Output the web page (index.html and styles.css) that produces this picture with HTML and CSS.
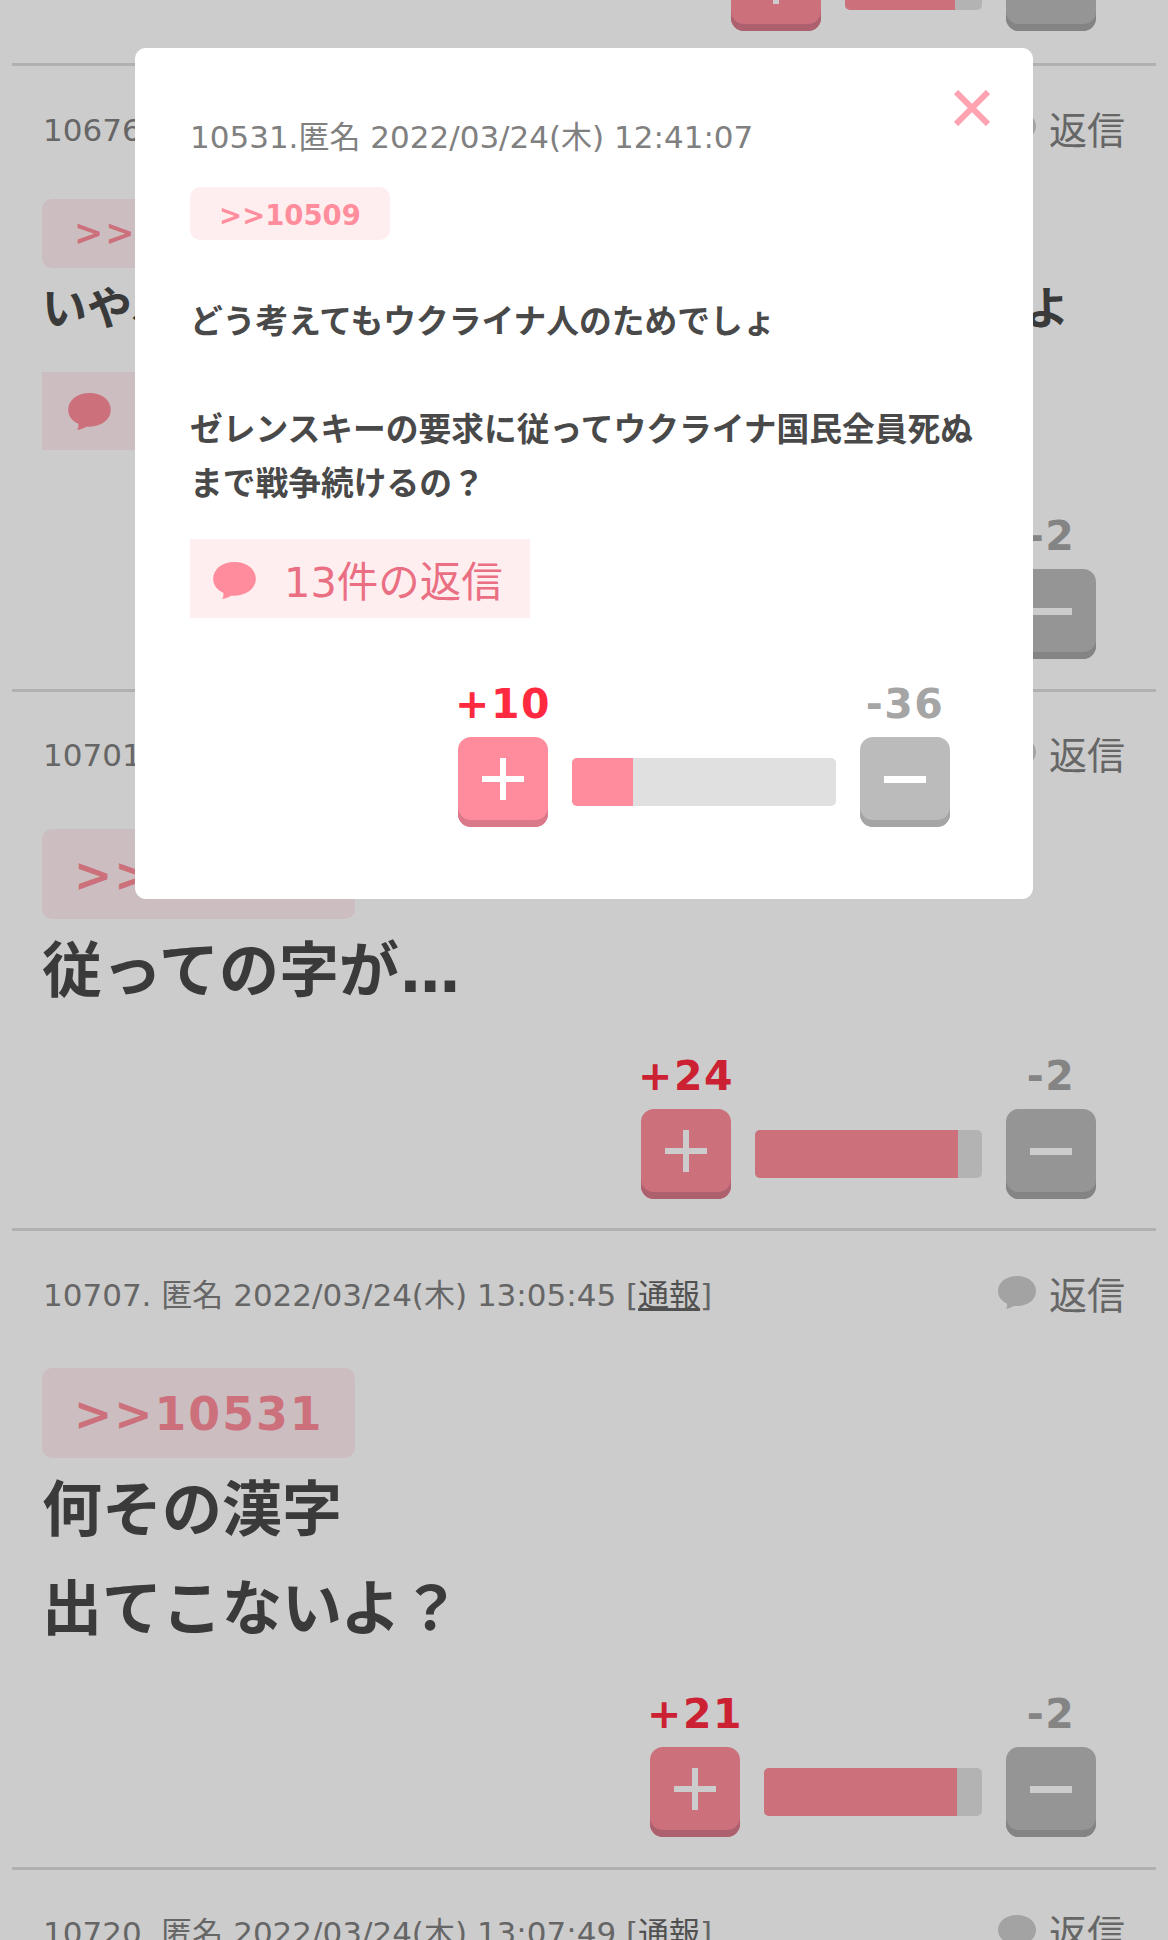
FILE: index.html
```html
<!DOCTYPE html>
<html lang="ja">
<head>
  <meta charset="UTF-8" />
  <title>コメント</title>
  <meta name="viewport" content="width=device-width, initial-scale=1.0" />
  <link rel="stylesheet" href="styles.css">
</head>
<body>

  <div class="page">
    <div class="posts">

      <!-- cut off by the top of the window -->
      <div class="post post-cut">
        <div class="votes">
          <div class="vote">
            <span class="count plus-count">+23</span>
            <button class="btn plus-btn"><span class="plus-mark"></span></button>
          </div>
          <div class="bar" style="width: 137px"><div class="fill" style="width: 80%"></div></div>
          <div class="vote">
            <span class="count minus-count">-2</span>
            <button class="btn minus-btn"><span class="minus-mark"></span></button>
          </div>
        </div>
      </div>

      <div class="post post-small">
        <div class="post-head">
          <p class="meta">10676. 匿名 2022/03/24(木) 12:58:21 [<u>通報</u>]</p>
          <span class="reply">
            <svg class="bubble" viewBox="0 0 38 33"><path d="M19 0C8 0 0 6.5 0 15c0 6 4 10.5 9 12.5.5 2 0 4-1 5.5 3-.5 6-2 8-3h3c11 0 19-6.5 19-15S30 0 19 0z"/></svg>
            返信
          </span>
        </div>
        <span class="anchor">&gt;&gt;10531</span>
        <p class="body-text">いや、どう考えてもウクライナ人のためじゃないよ</p>
        <span class="replies">
          <svg class="bubble" viewBox="0 0 38 33"><path d="M19 0C8 0 0 6.5 0 15c0 6 4 10.5 9 12.5.5 2 0 4-1 5.5 3-.5 6-2 8-3h3c11 0 19-6.5 19-15S30 0 19 0z"/></svg>
          13件の返信
        </span>
        <div class="votes">
          <div class="vote">
            <span class="count plus-count">+18</span>
            <button class="btn plus-btn"><span class="plus-mark"></span></button>
          </div>
          <div class="bar" style="width: 227px"><div class="fill" style="width: 89%"></div></div>
          <div class="vote">
            <span class="count minus-count">-2</span>
            <button class="btn minus-btn"><span class="minus-mark"></span></button>
          </div>
        </div>
      </div>

      <div class="post">
        <div class="post-head">
          <p class="meta">10701. 匿名 2022/03/24(木) 13:04:12 [<u>通報</u>]</p>
          <span class="reply">
            <svg class="bubble" viewBox="0 0 38 33"><path d="M19 0C8 0 0 6.5 0 15c0 6 4 10.5 9 12.5.5 2 0 4-1 5.5 3-.5 6-2 8-3h3c11 0 19-6.5 19-15S30 0 19 0z"/></svg>
            返信
          </span>
        </div>
        <span class="anchor">&gt;&gt;10531</span>
        <p class="body-text">従っての字が<span class="dots">...</span></p>
        <div class="votes">
          <div class="vote">
            <span class="count plus-count">+24</span>
            <button class="btn plus-btn"><span class="plus-mark"></span></button>
          </div>
          <div class="bar" style="width: 227px"><div class="fill" style="width: 89.5%"></div></div>
          <div class="vote">
            <span class="count minus-count">-2</span>
            <button class="btn minus-btn"><span class="minus-mark"></span></button>
          </div>
        </div>
      </div>

      <div class="post">
        <div class="post-head">
          <p class="meta">10707. 匿名 2022/03/24(木) 13:05:45 [<u>通報</u>]</p>
          <span class="reply">
            <svg class="bubble" viewBox="0 0 38 33"><path d="M19 0C8 0 0 6.5 0 15c0 6 4 10.5 9 12.5.5 2 0 4-1 5.5 3-.5 6-2 8-3h3c11 0 19-6.5 19-15S30 0 19 0z"/></svg>
            返信
          </span>
        </div>
        <span class="anchor">&gt;&gt;10531</span>
        <p class="body-text">何その漢字<br>出てこないよ？</p>
        <div class="votes">
          <div class="vote">
            <span class="count plus-count">+21</span>
            <button class="btn plus-btn"><span class="plus-mark"></span></button>
          </div>
          <div class="bar" style="width: 218px"><div class="fill" style="width: 88.6%"></div></div>
          <div class="vote">
            <span class="count minus-count">-2</span>
            <button class="btn minus-btn"><span class="minus-mark"></span></button>
          </div>
        </div>
      </div>

      <div class="post">
        <div class="post-head">
          <p class="meta">10720. 匿名 2022/03/24(木) 13:07:49 [<u>通報</u>]</p>
          <span class="reply">
            <svg class="bubble" viewBox="0 0 38 33"><path d="M19 0C8 0 0 6.5 0 15c0 6 4 10.5 9 12.5.5 2 0 4-1 5.5 3-.5 6-2 8-3h3c11 0 19-6.5 19-15S30 0 19 0z"/></svg>
            返信
          </span>
        </div>
      </div>

    </div>

    <!-- Comment popup -->
    <div class="overlay">
      <div class="modal">
        <svg class="close" viewBox="0 0 36 36"><path d="M2 2l32 32M34 2L2 34"/></svg>
        <p class="modal-meta">10531.匿名 2022/03/24(木) 12:41:07</p>
        <span class="modal-anchor">&gt;&gt;10509</span>
        <p class="modal-text">どう考えてもウクライナ人のためでしょ<br><br>ゼレンスキーの要求に従ってウクライナ国民全員死ぬまで戦争続けるの？</p>
        <span class="modal-replies">
          <svg class="bubble" viewBox="0 0 38 33"><path d="M19 0C8 0 0 6.5 0 15c0 6 4 10.5 9 12.5.5 2 0 4-1 5.5 3-.5 6-2 8-3h3c11 0 19-6.5 19-15S30 0 19 0z"/></svg>
          13件の返信
        </span>
        <div class="votes modal-votes">
          <div class="vote">
            <span class="count plus-count">+10</span>
            <button class="btn plus-btn"><span class="plus-mark"></span></button>
          </div>
          <div class="bar" style="width: 264px"><div class="fill" style="width: 23%"></div></div>
          <div class="vote">
            <span class="count minus-count">-36</span>
            <button class="btn minus-btn"><span class="minus-mark"></span></button>
          </div>
        </div>
      </div>
    </div>
  </div>

</body>
</html>
```

FILE: styles.css
```css
body, p {
  margin: 0;
  padding: 0;
}

body {
  font-family: "DejaVu Sans", "Noto Sans CJK JP", sans-serif;
  background: white;
  color: #494949;
}

.page {
  position: relative;
  height: 1940px;
  overflow: hidden;
}

.posts {
  margin: -147px 12px 0;
}

.post {
  border-bottom: 3px solid #ddd;
  padding: 36px 0 29.5px;
}

.post-cut {
  padding: 0 0 32px;
}

.post:last-child {
  border-bottom: none;
}

.post-head {
  display: flex;
  justify-content: space-between;
  align-items: center;
  height: 50px;
  padding: 0 31px;
  margin-bottom: 51px;
}

.meta {
  font-size: 31px;
  color: #808080;
}

.meta u {
  color: #666;
}

.reply {
  display: flex;
  align-items: center;
  gap: 13px;
  font-size: 38px;
  color: #808080;
}

.reply .bubble {
  width: 38px;
  height: 33px;
  fill: #ccc;
  margin-top: 1px;
}

.anchor {
  display: block;
  width: fit-content;
  margin-left: 30px;
  padding: 0 31px 0 32px;
  height: 90px;
  line-height: 94px;
  border-radius: 10px;
  background: #ffeef0;
  color: #ff8d9c;
  font-size: 45.7px;
  font-weight: bold;
  letter-spacing: 2px;
}

.body-text {
  margin: 0 0 0 30px;
  padding-top: 3px;
  font-size: 60px;
  font-weight: bold;
  line-height: 99px;
  white-space: nowrap;
}

.dots {
  letter-spacing: -3px;
}

.replies {
  display: flex;
  align-items: center;
  gap: 24px;
  width: fit-content;
  height: 78px;
  margin: 23px 0 0 30px;
  padding: 0 26px;
  background: #ffeef0;
  color: #ea6f83;
  font-size: 41px;
}

.replies .bubble {
  width: 43px;
  height: 37px;
  fill: #ff8c9c;
}

.post-small .post-head {
  margin-bottom: 47px;
}

.post-small .anchor {
  height: 69px;
  line-height: 69px;
  font-size: 35px;
}

.post-small .body-text {
  font-size: 45px;
  line-height: 78px;
}

.post-small .votes {
  margin-top: 61px;
}

.votes {
  display: flex;
  justify-content: flex-end;
  align-items: flex-end;
  gap: 24px;
  margin: 30px 60px 0 0;
}

.vote {
  display: flex;
  flex-direction: column;
  align-items: center;
  width: 90px;
}

.count {
  font-size: 41px;
  font-weight: bold;
  letter-spacing: 1.5px;
  line-height: 50px;
  white-space: nowrap;
  margin-bottom: 8px;
}

.plus-count {
  color: #ff2a3f;
}

.minus-count {
  color: #a5a5a5;
}

.btn {
  position: relative;
  width: 90px;
  height: 90px;
  padding: 0;
  border: none;
  border-radius: 13px;
}

.plus-btn {
  background-color: #ff8c9c;
  box-shadow: inset 0 -7px 0 #d9798a;
}

.minus-btn {
  background-color: #bbb;
  box-shadow: inset 0 -7px 0 #a5a5a5;
}

/* drawn over the button face */
.plus-mark, .minus-mark {
  position: absolute;
  left: 24px;
  top: 39px;
  width: 42px;
  height: 6px;
  background: white;
}

.minus-mark {
  height: 7px;
}

.plus-mark::after {
  content: "";
  position: absolute;
  left: 18px;
  top: -18px;
  width: 6px;
  height: 42px;
  background: white;
}

.bar {
  height: 48px;
  margin-bottom: 21px;
  border-radius: 5px;
  background: #e0e0e0;
  overflow: hidden;
}

.fill {
  height: 100%;
  background: #ff8c9c;
}

.overlay {
  position: absolute;
  inset: 0;
  background: rgba(0, 0, 0, 0.2);
}

.modal {
  position: absolute;
  left: 135px;
  top: 48px;
  box-sizing: border-box;
  width: 898px;
  height: 851px;
  padding: 68px 55px 0;
  background: white;
  border-radius: 11px;
}

.close {
  position: absolute;
  right: 43px;
  top: 42px;
  width: 36px;
  height: 36px;
  fill: none;
  stroke: #ffa3b1;
  stroke-width: 6;
}

.modal-meta {
  font-size: 31px;
  line-height: 42px;
  color: #808080;
}

.modal-anchor {
  display: block;
  width: 200px;
  box-sizing: border-box;
  height: 53px;
  line-height: 56px;
  margin-top: 29px;
  border-radius: 10px;
  background: #ffeef0;
  color: #ff8d9c;
  font-size: 27.5px;
  font-weight: bold;
  text-align: center;
}

.modal-text {
  margin-top: 55px;
  font-size: 32.75px;
  font-weight: bold;
  line-height: 54px;
}

.modal-replies {
  display: flex;
  align-items: center;
  gap: 28px;
  width: 340px;
  box-sizing: border-box;
  height: 79px;
  margin-top: 28px;
  padding-left: 23px;
  background: #ffeef0;
  color: #ea6f83;
  font-size: 41.5px;
}

.modal-replies .bubble {
  width: 43px;
  height: 37px;
  fill: #ff8c9c;
  margin-top: 3px;
}

.modal-votes {
  margin: 61px 28px 0 0;
}
```
